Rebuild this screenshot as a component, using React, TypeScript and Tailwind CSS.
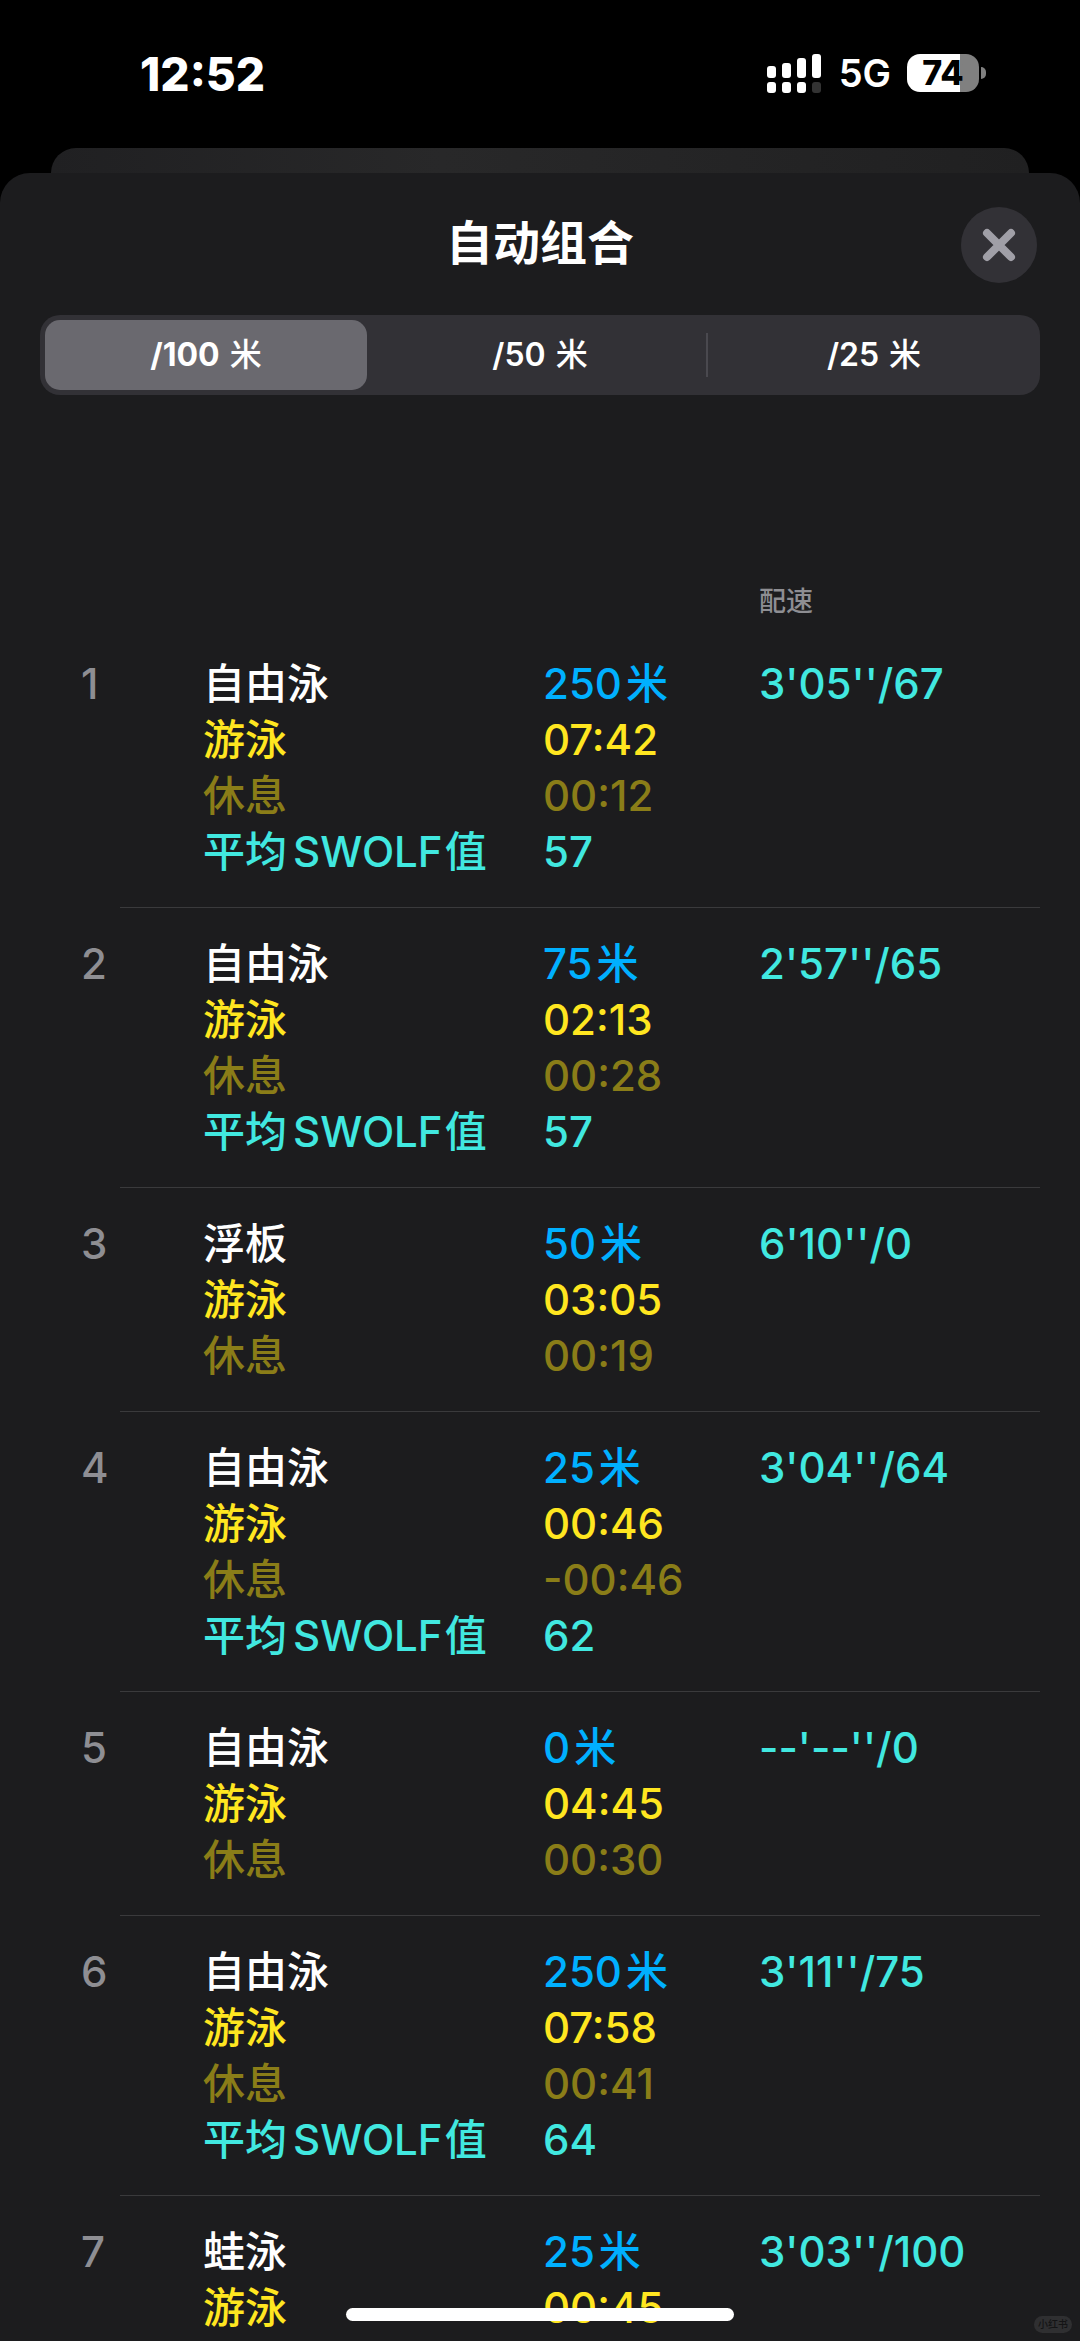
import { Fragment, useState } from "react";
import clsx from "clsx";

type LapSet = {
  id: number;
  stroke: string;
  distance: number;
  swim: string;
  rest?: string;
  swolf?: number;
  pace: string;
}

const sets: LapSet[] = [
  { id: 1, stroke: "自由泳", distance: 250, swim: "07:42", rest: "00:12", swolf: 57, pace: "3'05''/67" },
  { id: 2, stroke: "自由泳", distance: 75, swim: "02:13", rest: "00:28", swolf: 57, pace: "2'57''/65" },
  { id: 3, stroke: "浮板", distance: 50, swim: "03:05", rest: "00:19", pace: "6'10''/0" },
  { id: 4, stroke: "自由泳", distance: 25, swim: "00:46", rest: "-00:46", swolf: 62, pace: "3'04''/64" },
  { id: 5, stroke: "自由泳", distance: 0, swim: "04:45", rest: "00:30", pace: "--'--''/0" },
  { id: 6, stroke: "自由泳", distance: 250, swim: "07:58", rest: "00:41", swolf: 64, pace: "3'11''/75" },
  { id: 7, stroke: "蛙泳", distance: 25, swim: "00:45", pace: "3'03''/100" },
];

const units = [100, 50, 25];

function StatusBar() {
  return (
    <header className="flex h-[148px] shrink-0 items-start justify-between bg-black pt-12 pr-[94px] pl-[140px] text-white">
      <div className="text-[46px] leading-[52px] font-extrabold">12:52</div>
      <div className="flex h-[50px] items-center">
        <svg className="mr-[17px]" width="56" height="40" viewBox="0 0 56 40" fill="white" aria-label="信号">
          <rect x="1" y="13" width="9" height="12" rx="3" />
          <rect x="16" y="10" width="9" height="15" rx="3" />
          <rect x="31" y="5" width="9" height="20" rx="3" />
          <rect x="46" y="1" width="9" height="24" rx="3" />
          <rect x="1" y="29" width="9" height="11" rx="3" />
          <rect x="16" y="29" width="9" height="11" rx="3" />
          <rect x="31" y="29" width="9" height="11" rx="3" />
          <rect x="46" y="29" width="9" height="11" rx="3" fill="#333" />
        </svg>
        <span className="mr-4 text-[38px] leading-[52px] font-semibold">5G</span>
        <div className="flex items-center gap-[2px]">
          <div className="flex h-[38px] w-[72px] items-center justify-center rounded-[13px] bg-linear-to-r from-white from-74% to-[#808080] to-74% text-[34px] leading-[38px] font-extrabold text-black">
            74
          </div>
          <div className="h-[12px] w-[5px] rounded-r-full bg-[#808080]" />
        </div>
      </div>
    </header>
  )
}

function UnitPicker() {
  const [selected, setSelected] = useState(0);

  return (
    <div className="mx-10 mt-8 flex h-20 shrink-0 items-center rounded-[20px] bg-[#323136] p-[5px]">
      {units.map((unit, index) => (
        <Fragment key={unit}>
          {index > 0 &&
            <div className="flex w-3 shrink-0 justify-center">
              {selected !== index && selected !== index - 1 && <div className="h-11 w-[2px] bg-[#4a494f]" />}
            </div>
          }
          <button
            onClick={() => setSelected(index)}
            aria-pressed={selected === index}
            className={clsx(
              "flex h-full flex-1 items-center justify-center gap-[10px] rounded-[15px] text-[32px] text-white",
              selected === index ? "bg-[#6a696f] font-bold" : "font-semibold"
            )}
          >
            <span>/{unit}</span>
            <span className="font-medium">米</span>
          </button>
        </Fragment>
      ))}
    </div>
  )
}

function SetRow({ set }: { set: LapSet }) {
  const cell = "border-b border-[#3a3a3c] pt-7 pb-[27px] align-top";

  return (
    <tr>
      <th scope="row" className="pt-7 pl-[41px] text-left align-top font-medium text-[#8e8e93]">{set.id}</th>
      <td className={clsx(cell, "pl-[83px]")}>
        <div className="text-white">{set.stroke}</div>
        <div className="text-[#ffe620]">游泳</div>
        {set.rest && <div className="text-[#8a7d18]">休息</div>}
        {set.swolf && (
          <div className="flex text-[#41e8e0]">
            <span>平均</span>
            <span className="mr-[2px] ml-[6px]">SWOLF</span>
            <span>值</span>
          </div>
        )}
      </td>
      <td className={cell}>
        <div className="flex gap-1 text-[#00b0ff]">
          <span>{set.distance}</span>
          <span>米</span>
        </div>
        <div className="text-[#ffe620]">{set.swim}</div>
        {set.rest && <div className="text-[#8a7d18]">{set.rest}</div>}
        {set.swolf && <div className="text-[#41e8e0]">{set.swolf}</div>}
      </td>
      <td className={clsx(cell, "text-[#41e8e0]")}>{set.pace}</td>
    </tr>
  )
}

export default function App() {
  return (
    <div className="relative flex h-screen flex-col overflow-hidden bg-black font-['Inter','Noto_Sans_CJK_SC',sans-serif]">
      <StatusBar />
      {/* card of the screen underneath */}
      <div className="mx-[51px] h-[25px] shrink-0 rounded-t-[25px] bg-linear-to-r from-[#202022] via-[#282829] via-40% to-[#202021]" />

      <main className="flex min-h-0 flex-1 flex-col rounded-t-[30px] bg-[#1c1c1e]">
        <div className="grid shrink-0 grid-cols-[1fr_auto_1fr] items-center px-[43px] pt-[34px]">
          <h1 className="col-start-2 pb-1 text-[47px] leading-[70px] font-bold text-white">自动组合</h1>
          <button aria-label="关闭" className="flex size-[76px] items-center justify-center justify-self-end rounded-full bg-[#323136]">
            <svg width="34" height="34" viewBox="0 0 34 34" stroke="#a09fa7" strokeWidth="8" strokeLinecap="round">
              <path d="M5 5 L29 29 M29 5 L5 29" />
            </svg>
          </button>
        </div>

        <UnitPicker />

        <div className="min-h-0 flex-1 overflow-hidden px-10 pt-[185px]">
          <table className="w-full table-fixed border-separate border-spacing-0 text-[42px] leading-[56px] font-medium">
            <thead>
              <tr className="h-12 text-left align-top text-[27px] leading-[44px] text-[#8e8e93]">
                <td className="w-20" />
                <td className="w-[423px]" />
                <td className="w-[216px]" />
                <th scope="col" className="font-medium">配速</th>
              </tr>
            </thead>
            <tbody>
              {sets.map(set => <SetRow key={set.id} set={set} />)}
            </tbody>
          </table>
        </div>
      </main>

      <div className="absolute bottom-5 left-1/2 h-[13px] w-[388px] -translate-x-1/2 rounded-full bg-white" />
      <div className="absolute right-2 bottom-2 rounded-full bg-[#2f2f31] px-1 text-[10px] leading-[17px] font-medium text-[#141415]">小红书</div>
    </div>
  )
}
